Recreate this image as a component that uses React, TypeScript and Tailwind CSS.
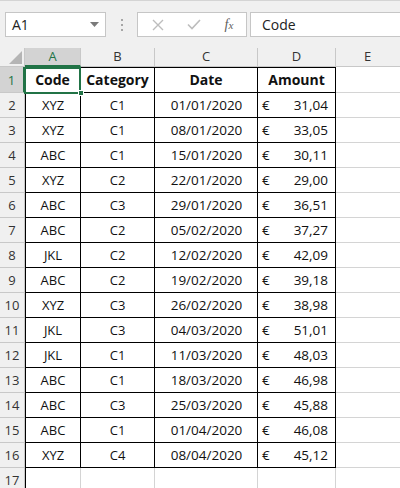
import React from 'react'

const rows = [
  ['XYZ', 'C1', '01/01/2020', '31,04'],
  ['XYZ', 'C1', '08/01/2020', '33,05'],
  ['ABC', 'C1', '15/01/2020', '30,11'],
  ['XYZ', 'C2', '22/01/2020', '29,00'],
  ['ABC', 'C3', '29/01/2020', '36,51'],
  ['ABC', 'C2', '05/02/2020', '37,27'],
  ['JKL', 'C2', '12/02/2020', '42,09'],
  ['ABC', 'C2', '19/02/2020', '39,18'],
  ['XYZ', 'C3', '26/02/2020', '38,98'],
  ['JKL', 'C3', '04/03/2020', '51,01'],
  ['JKL', 'C1', '11/03/2020', '48,03'],
  ['ABC', 'C1', '18/03/2020', '46,98'],
  ['ABC', 'C3', '25/03/2020', '45,88'],
  ['ABC', 'C1', '01/04/2020', '46,08'],
  ['XYZ', 'C4', '08/04/2020', '45,12'],
]

const font = { fontFamily: '"Open Sans", "Noto Sans", sans-serif' }

function Toolbar() {
  return (
    <div className="h-[48px] bg-[#f0f0f0] border-t border-[#d4d4d4] flex items-start pt-[11px] pl-[5px]">
      {/* name box */}
      <div className="w-[101px] h-[25px] bg-white border border-[#c6c6c6] flex items-center justify-between pl-[6px] pr-[6px]">
        <span className="text-[14px] text-[#222]">A1</span>
        <svg width="9" height="5" viewBox="0 0 9 5">
          <path d="M0 0h9L4.5 5z" fill="#7a7a7a" />
        </svg>
      </div>
      {/* dots */}
      <div className="w-[31px] h-[25px] flex flex-col items-center justify-center gap-[3px]">
        <div className="w-[2px] h-[2px] bg-[#a6a6a6]" />
        <div className="w-[2px] h-[2px] bg-[#a6a6a6]" />
        <div className="w-[2px] h-[2px] bg-[#a6a6a6]" />
      </div>
      {/* formula buttons */}
      <div className="w-[110px] h-[25px] bg-white border border-[#c6c6c6] flex items-center">
        <div className="w-[38px] flex justify-center pl-[1px]">
          <svg width="12" height="12" viewBox="0 0 12 12">
            <path d="M1 1l10 10M11 1L1 11" stroke="#bdbdbd" strokeWidth="1.4" />
          </svg>
        </div>
        <div className="w-[36px] flex justify-center">
          <svg width="14" height="11" viewBox="0 0 14 11">
            <path d="M1 5.5l4 4L13 1" stroke="#bdbdbd" strokeWidth="1.6" fill="none" />
          </svg>
        </div>
        <div className="w-[34px] flex justify-center">
          <span className="text-[14px] italic text-[#606060]" style={{ fontFamily: '"Liberation Serif", serif' }}>
            f<span className="text-[11px]">x</span>
          </span>
        </div>
      </div>
      {/* formula input */}
      <div className="ml-[3px] flex-1 h-[25px] bg-white border border-[#c6c6c6] border-r-0 flex items-center pl-[11px]">
        <span className="text-[14px] text-[#222]">Code</span>
      </div>
    </div>
  )
}

const colW = ['w-[56px]', 'w-[74px]', 'w-[103px]', 'w-[78px]']

function Header() {
  const letters = ['A', 'B', 'C', 'D']
  return (
    <div className="flex h-[19px] bg-[#f0f0f0]">
      <div className="w-[25px] h-full border-r border-b border-[#c8c8c8] flex items-end justify-end">
        <svg width="13" height="13" viewBox="0 0 13 13" className="mb-[2px] mr-[2px]">
          <path d="M13 0v13H0z" fill="#b5b5b5" />
        </svg>
      </div>
      {letters.map((l, i) => (
        <div
          key={l}
          className={`${colW[i]} h-full border-r flex items-center justify-center text-[13px] ${
            i === 0
              ? 'bg-[#d3d3d3] border-[#c8c8c8] border-b-2 border-b-[#217346] text-[#217346]'
              : 'border-b border-[#c8c8c8] text-[#333]'
          }`}
        >
          {l}
        </div>
      ))}
      <div className="flex-1 h-full border-b border-[#c8c8c8] flex items-center justify-center text-[13px] text-[#333] pr-[1px]">
        E
      </div>
    </div>
  )
}

function RowNum({ n, h, selected }: { n: number; h: string; selected?: boolean }) {
  return (
    <div
      className={`w-[25px] ${h} border-r border-b border-[#c8c8c8] flex items-end justify-center pb-[2px] text-[13px] ${
        selected ? 'bg-[#d3d3d3] text-[#217346] border-r-2 border-r-[#217346]' : 'bg-[#f0f0f0] text-[#333]'
      }`}
    >
      {n}
    </div>
  )
}

function App() {
  return (
    <div className="w-[400px] h-[488px] overflow-hidden bg-white text-[#111]" style={font}>
      <Toolbar />
      <Header />
      {/* row 1 */}
      <div className="flex">
        <RowNum n={1} h="h-[26px]" selected />
        <div className="relative w-[56px] h-[26px] border-t border-b border-r border-black flex items-end justify-center pb-[2px] text-[14px] font-bold">
          Code
          <div className="absolute -left-[1px] -top-[1px] w-[57px] h-[27px] border-2 border-[#217346]" />
          <div className="absolute -right-[4px] -bottom-[4px] w-[6px] h-[6px] bg-[#217346] border border-white" />
        </div>
        <div className="w-[74px] h-[26px] border-t border-b border-r border-black flex items-end justify-center pb-[2px] text-[14px] font-bold">
          Category
        </div>
        <div className="w-[103px] h-[26px] border-t border-b border-r border-black flex items-end justify-center pb-[2px] text-[14px] font-bold">
          Date
        </div>
        <div className="w-[78px] h-[26px] border-t border-b border-r border-black flex items-end justify-center pb-[2px] text-[14px] font-bold">
          Amount
        </div>
        <div className="flex-1 h-[26px] border-b border-[#d4d4d4]" />
      </div>
      {rows.map((r, i) => (
        <div key={i} className="flex">
          <RowNum n={i + 2} h="h-[25px]" />
          <div className="w-[56px] h-[25px] border-l border-b border-r border-black flex items-end justify-center pb-[2px] text-[13px]">
            {r[0]}
          </div>
          <div className="w-[74px] h-[25px] border-b border-r border-black flex items-end justify-center pb-[2px] text-[13px]">
            {r[1]}
          </div>
          <div className="w-[103px] h-[25px] border-b border-r border-black flex items-end justify-center pb-[2px] text-[13.5px] pl-[1px]">
            {r[2]}
          </div>
          <div className="w-[78px] h-[25px] border-b border-r border-black flex items-end justify-between pb-[2px] pl-[4px] pr-[7px] text-[13.5px]">
            <span>€</span>
            <span>{r[3]}</span>
          </div>
          <div className="flex-1 h-[25px] border-b border-[#d4d4d4]" />
        </div>
      ))}
      {/* row 17 */}
      <div className="flex">
        <RowNum n={17} h="h-[25px]" />
        <div className="w-[56px] h-[25px] border-l border-l-black border-r border-b border-[#d4d4d4]" />
        <div className="w-[74px] h-[25px] border-r border-b border-[#d4d4d4]" />
        <div className="w-[103px] h-[25px] border-r border-b border-[#d4d4d4]" />
        <div className="w-[78px] h-[25px] border-r border-b border-[#d4d4d4]" />
        <div className="flex-1 h-[25px] border-b border-[#d4d4d4]" />
      </div>
    </div>
  )
}

export default App
